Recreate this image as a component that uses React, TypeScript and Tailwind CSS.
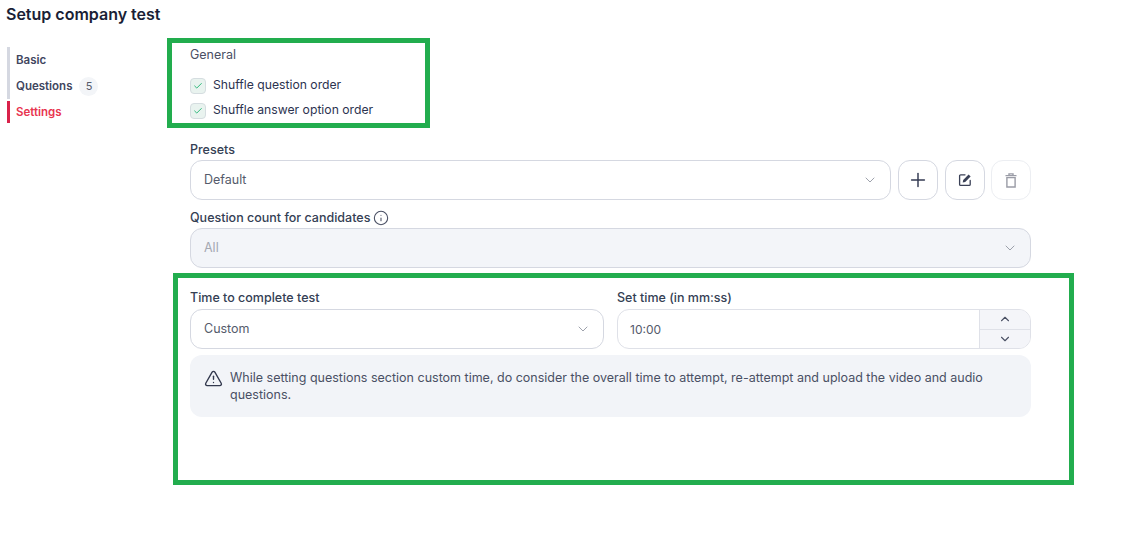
import { Check, ChevronDown, ChevronUp, Info, Plus, TriangleAlert } from 'lucide-react'

const labelClass = 'text-[12.5px] leading-[16px] pt-px font-medium text-[#344054]'

function Select({ value, disabled }: { value: string; disabled?: boolean }) {
  return (
    <div
      className={
        'h-10 flex-1 flex items-center justify-between rounded-xl border border-[#d5d8e1] pl-[13px] pr-[12px] ' +
        (disabled ? 'bg-[#f3f5f9] text-[#a4a8b2]' : 'bg-white text-[#555b6b]')
      }
    >
      <span className="text-[12.5px] pt-px">{value}</span>
      <ChevronDown className="w-4 h-4 text-[#8a8f9b]" strokeWidth={1.25} />
    </div>
  )
}

function CheckRow({ label }: { label: string }) {
  return (
    <div className="h-[25px] flex items-center gap-[7px]">
      <div className="w-4 h-4 rounded-[4px] bg-[#e9f3ef] border border-[#d5dde0] flex items-center justify-center">
        <Check className="w-[10px] h-[10px] text-[#22b573]" strokeWidth={2.25} />
      </div>
      <span className="text-[12.2px] text-[#2c3350]">{label}</span>
    </div>
  )
}

export default function App() {
  return (
    <div className="relative w-[1127px] h-[549px] bg-white overflow-hidden font-['Inter','Liberation_Sans',sans-serif]">
      <h1 className="pl-[6px] pt-[4px] h-[47px] text-[16px] leading-[20px] font-semibold text-[#1a1f36]">Setup company test</h1>

      <div className="flex">
        {/* side nav */}
        <nav className="w-[190px] pl-[7px] shrink-0">
          <div className="border-l-[3px] border-[#d5d8e1] pl-[6px] pt-px h-[26px] flex items-center text-[11.5px] font-semibold text-[#3f4660]">Basic</div>
          <div className="border-l-[3px] border-[#d5d8e1] pl-[6px] pt-px h-[26px] flex items-center gap-[7px] text-[11.5px] font-semibold text-[#3f4660]">
            Questions
            <span className="w-[19px] h-[19px] rounded-full bg-[#f3f5f8] flex items-center justify-center text-[11px] font-normal text-[#555b6b]">5</span>
          </div>
          <div className="mt-[2px] border-l-[3px] border-[#d9224a] pl-[6px] pt-px h-[22px] flex items-center text-[11.5px] font-semibold text-[#e8354f]">Settings</div>
        </nav>

        {/* settings form */}
        <main className="w-[841px] shrink-0">
          <div className="h-4 flex items-center text-[12.5px] text-[#4a5064]">General</div>
          <div className="mt-[10px]">
            <CheckRow label="Shuffle question order" />
            <CheckRow label="Shuffle answer option order" />
          </div>

          <div className={labelClass + ' mt-[18px]'}>Presets</div>
          <div className="mt-[2px] flex gap-[7px]">
            <Select value="Default" />
            <div className="flex">
              <button className="w-10 h-10 rounded-xl border border-[#d5d8e1] flex items-center justify-center text-[#333a52]">
                <Plus className="w-[22px] h-[22px]" strokeWidth={1.6} />
              </button>
              <button className="ml-[7px] w-10 h-10 rounded-xl border border-[#d5d8e1] flex items-center justify-center text-[#3a4056]">
                <svg viewBox="0 0 14 14" className="w-[14px] h-[14px]" fill="none">
                  <path d="M7 1.8H2.6a1 1 0 0 0-1 1v8.6a1 1 0 0 0 1 1h8.6a1 1 0 0 0 1-1V7.4" stroke="currentColor" strokeWidth="1.3" strokeLinecap="round" />
                  <path d="M5.2 6.9 10.6 1.5l2 2-5.4 5.4-2.5.5z" fill="currentColor" />
                </svg>
              </button>
              <button className="ml-[6px] w-10 h-10 rounded-xl border border-[#eceef2] flex items-center justify-center text-[#9a9ca6]">
                <svg viewBox="0 0 12 15" className="w-3 h-[15px]" fill="none" stroke="currentColor" strokeWidth="1.4">
                  <path d="M.5 2.6h11M4 2.4V.9h4v1.5" />
                  <path d="M1.9 4.6h8.2v9.4H1.9z" />
                </svg>
              </button>
            </div>
          </div>

          <div className={labelClass + ' mt-[9px] flex items-center gap-[3px]'}>
            Question count for candidates
            <Info className="w-4 h-4 text-[#4a5064]" strokeWidth={1.6} />
          </div>
          <div className="mt-[2px] flex">
            <Select value="All" disabled />
          </div>

          <div className="mt-[21px] flex gap-[13px]">
            <div className="flex-1">
              <div className={labelClass}>Time to complete test</div>
              <div className="mt-[3px] flex">
                <Select value="Custom" />
              </div>
            </div>
            <div className="flex-1">
              <div className={labelClass}>Set time (in mm:ss)</div>
              <div className="mt-[3px] h-10 flex rounded-xl border border-[#dfe1e8] overflow-hidden">
                <div className="flex-1 flex items-center pl-3 pt-px text-[12px] text-[#555b6b]">10:00</div>
                <div className="w-[51px] border-l border-[#dfe1e8] bg-[#f4f5f9] flex flex-col text-[#4a5064]">
                  <div className="flex-1 flex items-center justify-center border-b border-[#dfe1e8]">
                    <ChevronUp className="w-[14px] h-[14px]" strokeWidth={1.9} />
                  </div>
                  <div className="flex-1 flex items-center justify-center">
                    <ChevronDown className="w-[14px] h-[14px]" strokeWidth={1.9} />
                  </div>
                </div>
              </div>
            </div>
          </div>

          <div className="mt-[6px] h-[62px] rounded-xl bg-[#f2f4f8] flex items-start gap-[7px] pt-[14px] pl-[14px] pr-[20px]">
            <TriangleAlert className="w-[19px] h-[19px] text-[#33394e] shrink-0" strokeWidth={1.75} />
            <p className="text-[12.5px] leading-[17px] text-[#4a5064]">
              While setting questions section custom time, do consider the overall time to attempt, re-attempt and upload the video and audio questions.
            </p>
          </div>
        </main>
      </div>

      {/* green review annotations */}
      <div className="absolute left-[167px] top-[38px] w-[263px] h-[90px] border-[5px] border-[#22ad4e]" />
      <div className="absolute left-[173px] top-[273px] w-[901px] h-[212px] border-[5px] border-[#22ad4e]" />
    </div>
  )
}
